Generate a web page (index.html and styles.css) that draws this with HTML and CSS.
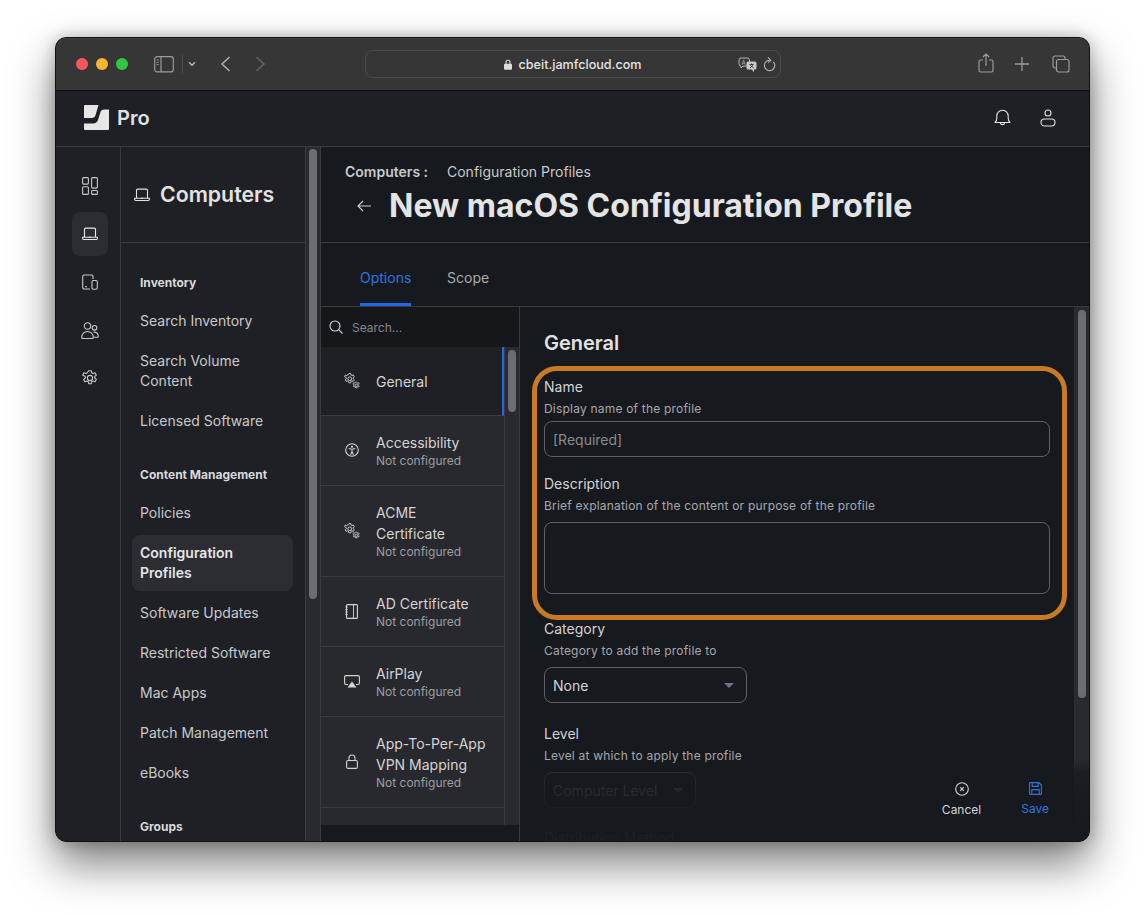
FILE: index.html
```html
<!DOCTYPE html>
<html lang="en">
<head>
<meta charset="utf-8">
<title>New macOS Configuration Profile</title>
<link rel="stylesheet" href="styles.css">
</head>
<body>
<svg class="defs" width="0" height="0" aria-hidden="true">
  <symbol id="laptop" viewBox="0 0 16 14"><path d="M2.5 10V2.3c0-.7.5-1.2 1.2-1.2h8.6c.7 0 1.2.5 1.2 1.2V10M.6 10.3h14.8v1c0 .8-.5 1.2-1.2 1.2H1.8c-.7 0-1.2-.4-1.2-1.2z" fill="none" stroke="currentColor" stroke-width="1.1"/><path d="M6.8 10.3h2.4" stroke="currentColor" stroke-width="1.1"/></symbol>
  <symbol id="gear-shape" viewBox="0 0 16 16"><path d="M6.7.8h2.600l.4 2 1.300.7 2-.7 1.300 2.300-1.600 1.400v1.500l1.600 1.400-1.300 2.300-2-.7-1.300.7-.4 2H6.700l-.4-2-1.300-.7-2 .7-1.300-2.300 1.600-1.400V6.500L.7 5.100 2 2.800l2 .7 1.300-.7z" stroke-linejoin="round"/><circle cx="8" cy="8" r="2.600"/></symbol>
  <symbol id="gears" viewBox="0 0 16 16"><g fill="none" stroke="currentColor"><use href="#gear-shape" x="0" y="0" width="11.500" height="11.500" stroke-width="1.300"/><use href="#gear-shape" x="8.500" y="8.500" width="7.500" height="7.500" stroke-width="1.700"/></g></symbol>
</svg>
<div class="window">
  <div class="toolbar">
    <span class="light red"></span><span class="light yellow"></span><span class="light green"></span>
    <svg class="tb-sidebar" width="20" height="17" viewBox="0 0 20 17" fill="none" stroke="#9b9b9b" stroke-width="1.200"><rect x=".7" y=".7" width="18.600" height="15.200" rx="2.500"/><path d="M7 .7v15.200"/><path d="M2.700 4h2M2.700 6.300h2M2.700 8.600h2" stroke-width="1"/></svg>
    <span class="tb-divider"></span>
    <svg class="tb-chev" width="8" height="6" viewBox="0 0 8 6" fill="none" stroke="#b5b5b5" stroke-width="1.500"><path d="M1 1.200l3 3 3-3"/></svg>
    <svg class="tb-back" width="11" height="16" viewBox="0 0 11 16" fill="none" stroke="#b0b0b0" stroke-width="1.500"><path d="M9.500 1L2 8l7.500 7"/></svg>
    <svg class="tb-fwd" width="11" height="16" viewBox="0 0 11 16" fill="none" stroke="#666" stroke-width="1.500"><path d="M1.500 1L9 8l-7.500 7"/></svg>
    <div class="address">
      <svg class="lock" width="8" height="11" viewBox="0 0 8 11"><path d="M2 5V3.200a2 2 0 014 0V5" fill="none" stroke="#ddd" stroke-width="1.100"/><rect y="4.700" width="8" height="6" rx="1.200" fill="#ddd"/></svg>
      <span class="url">cbeit.jamfcloud.com</span>
      <svg class="translate" width="19" height="15" viewBox="0 0 19 15"><path d="M3 1h6.500a2 2 0 012 2v4a2 2 0 01-2 2H5l-2 2V9a2 2 0 01-2-2V3a2 2 0 012-2z" fill="none" stroke="#b5b5b5"/><text x="3.500" y="7.500" class="translate-a">A</text><path d="M10 4.500h7a1.500 1.500 0 011.500 1.500v5a1.500 1.500 0 01-1.500 1.500h-1V15l-2.500-2.500H10A1.500 1.500 0 018.500 11V6A1.500 1.500 0 0110 4.500z" fill="#c8c8c8"/><path d="M11.500 7.500h4M13.500 6.500v1M12 11l3-3M12.500 8.500l3 2.500" stroke="#333" stroke-width=".9"/></svg>
      <svg class="reload" width="13" height="15" viewBox="0 0 13 15" fill="none" stroke="#b5b5b5" stroke-width="1.100"><path d="M6.500 3.200A5.200 5.200 0 1010.300 4.800"/><path d="M5 .5l2.800 2.700L5 5.700"/></svg>
    </div>
    <svg class="tb-share" width="16" height="20" viewBox="0 0 16 20" fill="none" stroke="#9b9b9b" stroke-width="1.200"><path d="M5 7H2.500A1.500 1.500 0 001 8.500v9A1.500 1.500 0 002.500 19h11a1.500 1.500 0 001.500-1.500v-9A1.500 1.500 0 0013.500 7H11M8 13V1M4.800 4L8 1l3.200 3"/></svg>
    <svg class="tb-plus" width="14" height="14" viewBox="0 0 14 14" fill="none" stroke="#9b9b9b" stroke-width="1.300"><path d="M7 0v14M0 7h14"/></svg>
    <svg class="tb-tabs" width="18" height="18" viewBox="0 0 18 18" fill="none" stroke="#9b9b9b" stroke-width="1.200"><path d="M4 13H3a2 2 0 01-2-2V3a2 2 0 012-2h8a2 2 0 012 2v1"/><rect x="4.500" y="4.500" width="12.500" height="12.500" rx="2"/></svg>
  </div>

  <header class="appbar">
    <svg class="logo" width="25" height="25" viewBox="0 0 25 25" fill="#e6e6e6"><path d="M1 0h13.500l-3 10.200c-.5 1.800-1.800 2.800-3.500 2.800H0V1a1 1 0 011-1z"/><path d="M20 4.500h5V24a1 1 0 01-1 1H1a1 1 0 01-1-1v-5.500h9c2.300 0 4.300-1.300 5-3.500l2.400-7.800c.5-1.600 2-2.700 3.600-2.700z"/></svg>
    <span class="brand">Pro</span>
    <span class="spacer"></span>
    <svg class="bell" width="17" height="18" viewBox="0 0 17 18" fill="none" stroke="#e2e2e2" stroke-width="1.100"><path d="M1 13.500c1.300-1 1.800-2.200 1.800-4.200V7a5.700 5.700 0 0111.400 0v2.300c0 2 .5 3.200 1.800 4.200z" stroke-linejoin="round"/><path d="M6.300 14a2.300 2.300 0 004.400 0"/></svg>
    <svg class="user" width="16" height="18" viewBox="0 0 16 18" fill="none" stroke="#e2e2e2" stroke-width="1.100"><circle cx="8" cy="4" r="3"/><rect x="1" y="10" width="14" height="7" rx="3.500"/></svg>
  </header>

  <div class="body">
    <nav class="rail">
      <span class="rail-btn"><svg width="16" height="18" viewBox="0 0 16 18" fill="none" stroke="currentColor" stroke-width="1.100"><rect x=".6" y=".6" width="5.800" height="6.500" rx="1"/><rect x="9.600" y=".6" width="5.800" height="10.500" rx="1"/><rect x=".6" y="9.700" width="5.800" height="7.700" rx="1"/><rect x="9.600" y="13.500" width="5.800" height="3.900" rx="1"/></svg></span>
      <span class="rail-btn active"><svg width="16" height="14"><use href="#laptop"/></svg></span>
      <span class="rail-btn"><svg width="16" height="16" viewBox="0 0 16 16" fill="none" stroke="currentColor" stroke-width="1.100"><path d="M8 15H2.200A1.500 1.500 0 01.700 13.500v-11A1.500 1.500 0 012.200 1h7.300A1.500 1.500 0 0111 2.500V5"/><rect x="10" y="6.500" width="5.300" height="8.800" rx="1.200"/><path d="M3 12.800h2"/></svg></span>
      <span class="rail-btn"><svg width="18" height="17" viewBox="0 0 18 17" fill="none" stroke="currentColor" stroke-width="1.100"><circle cx="6.500" cy="4" r="3.200"/><circle cx="13.500" cy="5.800" r="2.300"/><path d="M.7 15.500c0-3.500 2.500-6 5.800-6s5.800 2.500 5.800 6c0 .5-.4 1-1 1H1.700c-.6 0-1-.5-1-1z"/><path d="M12.500 10.200c2.700-.5 4.800 1.400 4.800 4 0 .5-.4 1-1 1h-3.300"/></svg></span>
      <span class="rail-btn"><svg width="16" height="16" fill="none" stroke="currentColor" stroke-width="1.100"><use href="#gear-shape"/></svg></span>
    </nav>

    <aside class="nav">
      <div class="nav-scroll">
        <div class="nav-head"><svg width="16" height="14"><use href="#laptop"/></svg><span>Computers</span></div>
        <div class="nav-section first">Inventory</div>
        <a class="nav-item">Search Inventory</a>
        <a class="nav-item">Search Volume<br>Content</a>
        <a class="nav-item">Licensed Software</a>
        <div class="nav-section">Content Management</div>
        <a class="nav-item">Policies</a>
        <a class="nav-item current">Configuration<br>Profiles</a>
        <a class="nav-item">Software Updates</a>
        <a class="nav-item">Restricted Software</a>
        <a class="nav-item">Mac Apps</a>
        <a class="nav-item">Patch Management</a>
        <a class="nav-item">eBooks</a>
        <div class="nav-section">Groups</div>
      </div>
      <div class="track nav-track"><span class="thumb"></span></div>
    </aside>

    <main class="main">
      <div class="page-head">
        <div class="crumbs"><b>Computers :</b><span>Configuration Profiles</span></div>
        <div class="title-row">
          <svg width="14" height="12" viewBox="0 0 14 12" fill="none" stroke="#cfcfcf" stroke-width="1.100"><path d="M14 6H1M6 1L1 6l5 5"/></svg>
          <h1>New macOS Configuration Profile</h1>
        </div>
      </div>
      <div class="tabs"><a class="tab on">Options</a><a class="tab">Scope</a></div>
      <div class="panels">
        <section class="payloads">
          <div class="search">
            <svg width="14" height="14" viewBox="0 0 14 14" fill="none" stroke="#d5d5d5" stroke-width="1.100"><circle cx="6" cy="6" r="5"/><path d="M9.700 9.700L13.500 13.500"/></svg>
            <span>Search...</span>
          </div>
          <div class="payload-scroll">
            <div class="payload-list">
              <div class="payload selected"><svg width="16" height="16"><use href="#gears"/></svg><div class="p-text"><div class="p-name">General</div></div></div>
              <div class="payload"><svg width="16" height="16" viewBox="0 0 16 16" fill="none" stroke="currentColor"><circle cx="8" cy="8" r="6.300" stroke-width="1.100"/><circle cx="8" cy="4.800" r="1.100" fill="currentColor" stroke="none"/><path d="M4.600 6.500L8 7.200l3.400-.7M8 7.200v2.500M8 9.700l-1.500 3M8 9.700l1.500 3" stroke-width="1.100"/></svg><div class="p-text"><div class="p-name">Accessibility</div><div class="p-sub">Not configured</div></div></div>
              <div class="payload"><svg width="16" height="16"><use href="#gears"/></svg><div class="p-text"><div class="p-name">ACME Certificate</div><div class="p-sub">Not configured</div></div></div>
              <div class="payload"><svg width="14" height="15" viewBox="0 0 14 15" fill="none" stroke="currentColor" stroke-width="1.100"><rect x="1.500" y=".6" width="10.900" height="13.800" rx="1"/><path d="M8.500.6v13.800M.3 3h2.400M.3 5.500h2.400M.3 8h2.400M.3 10.500h2.400" stroke-width=".9"/></svg><div class="p-text"><div class="p-name">AD Certificate</div><div class="p-sub">Not configured</div></div></div>
              <div class="payload"><svg width="16" height="13" viewBox="0 0 16 13" fill="none" stroke="currentColor" stroke-width="1.100"><path d="M4 9.500H2A1.400 1.400 0 01.600 8.100V2A1.400 1.400 0 012 .6h12A1.400 1.400 0 0115.400 2v6.100A1.400 1.400 0 0114 9.500h-2"/><path d="M8 6.500l4.500 5.900h-9z" fill="currentColor" stroke="none"/></svg><div class="p-text"><div class="p-name">AirPlay</div><div class="p-sub">Not configured</div></div></div>
              <div class="payload"><svg width="12" height="15" viewBox="0 0 12 15" fill="none" stroke="currentColor" stroke-width="1.100"><path d="M3 6.500V4a3 3 0 016 0v2.500"/><rect x=".6" y="6.500" width="10.800" height="7.900" rx="1.500"/></svg><div class="p-text"><div class="p-name">App-To-Per-App VPN Mapping</div><div class="p-sub">Not configured</div></div></div>
              <div class="payload"></div>
            </div>
            <div class="track list-track"><span class="thumb"></span></div>
          </div>
          <div class="payload-foot"></div>
        </section>

        <section class="form">
          <div class="form-body">
            <h2>General</h2>
            <label class="f-label">Name</label>
            <p class="f-help">Display name of the profile</p>
            <div class="input">[Required]</div>
            <label class="f-label">Description</label>
            <p class="f-help">Brief explanation of the content or purpose of the profile</p>
            <div class="input area"></div>
            <label class="f-label">Category</label>
            <p class="f-help">Category to add the profile to</p>
            <div class="input select cat"><span>None</span><i class="caret"></i></div>
            <label class="f-label">Level</label>
            <p class="f-help">Level at which to apply the profile</p>
            <div class="input select lvl"><span>Computer Level</span><i class="caret"></i></div>
            <label class="f-label">Distribution Method</label>
          </div>
          <div class="track form-track"><span class="thumb"></span></div>
          <div class="fade"></div>
          <div class="actions">
            <a class="action"><svg width="14" height="14" viewBox="0 0 14 14" fill="none" stroke="currentColor" stroke-width="1.100"><circle cx="7" cy="7" r="6.300"/><path d="M5.200 5.200l3.600 3.600M8.800 5.200l-3.600 3.600"/></svg><span>Cancel</span></a>
            <a class="action save"><svg width="13" height="13" viewBox="0 0 13 13" fill="none" stroke="currentColor" stroke-width="1.100"><path d="M1.500.6h8.300L12.400 3v8.400a1 1 0 01-1 1H1.500a1 1 0 01-1-1V1.600a1 1 0 011-1z"/><path d="M3.200.6v3.800h6V.6M2.800 12.400V7.600h7.400v4.800"/></svg><span>Save</span></a>
          </div>
        </section>
      </div>
    </main>
  </div>
  <div class="callout"></div>
</div>
</body>
</html>
```
FILE: styles.css
```css
* { box-sizing: border-box; }
html, body { margin: 0; height: 100%; }
body {
  background: #fff;
  padding: 37px 55px;
  font-family: Inter, "Liberation Sans", sans-serif;
  color: #d4d4d6;
  overflow: hidden;
}
.defs { position: absolute; }
h1, h2, p { margin: 0; }

.window {
  position: relative;
  width: 1035px;
  height: 805px;
  border: 1px solid #111;
  border-radius: 11px;
  overflow: hidden;
  display: flex;
  flex-direction: column;
  background: #1e2025;
}
body::before {
  content: "";
  position: absolute;
  left: 55px;
  top: 37px;
  width: 1035px;
  height: 805px;
  border-radius: 11px;
  box-shadow: 0 22px 44px rgba(0, 0, 0, .5), 0 0 16px rgba(0, 0, 0, .25);
}

/* Browser toolbar */
.toolbar {
  height: 53px;
  flex: none;
  display: flex;
  align-items: center;
  padding-left: 20px;
  padding-bottom: 1px;
  background: #363636;
  border-bottom: 1px solid #0c0c0c;
  border-top: 1px solid #444;
}
.light { width: 12px; height: 12px; border-radius: 50%; margin-right: 8px; }
.red { background: #f9565a; }
.yellow { background: #fbb52f; }
.green { background: #2fc641; }
.tb-sidebar { margin-left: 18px; }
.tb-divider { width: 1px; height: 18px; background: #4c4c4c; margin-left: 8px; }
.tb-chev { margin-left: 5px; }
.tb-back { margin-left: 24px; }
.tb-fwd { margin-left: 24px; }
.address {
  width: 416px;
  height: 28px;
  margin-left: 99px;
  position: relative;
  display: flex;
  align-items: center;
  justify-content: center;
  gap: 7px;
  border: 1px solid #4b4b4b;
  border-radius: 8px;
  padding-right: 1px;
}
.url { font-size: 12.6px; font-weight: 500; color: #e4e4e4; }
.translate, .reload { position: absolute; top: 6px; }
.translate { left: 372px; }
.reload { left: 397px; }
.translate-a { font-size: 6px; fill: #b5b5b5; font-family: Inter, sans-serif; }
.tb-share { margin-left: 197px; margin-top: -3px; }
.tb-plus { margin-left: 21px; }
.tb-tabs { margin-left: 23px; }

/* App bar */
.appbar {
  height: 56px;
  flex: none;
  display: flex;
  align-items: center;
  padding: 0 33px 2px 28px;
  background: #1e2025;
  border-bottom: 1px solid #3a3b40;
}
.logo { flex: none; }
.brand { font-size: 20px; font-weight: 600; color: #e2e2e3; margin-left: 8px; }
.spacer { flex: 1; }
.user { margin-left: 29px; }

.body { flex: 1; min-height: 0; display: flex; }

/* Icon rail */
.rail {
  width: 65px;
  flex: none;
  display: flex;
  flex-direction: column;
  align-items: center;
  padding: 17px 0 0 4px;
  gap: 4px;
  border-right: 1px solid #3a3b40;
  color: #c9c9cb;
}
.rail-btn {
  width: 36px;
  height: 44px;
  display: flex;
  align-items: center;
  justify-content: center;
  border-radius: 8px;
}
.rail-btn.active { background: #2b2d32; color: #e8e8e8; }

/* Section nav */
.nav {
  width: 200px;
  flex: none;
  display: flex;
  overflow: hidden;
  border-right: 1px solid #3a3b40;
}
.nav-scroll { width: 184px; flex: none; display: flex; flex-direction: column; overflow: hidden; }
.nav-head {
  height: 96px;
  flex: none;
  display: flex;
  align-items: center;
  gap: 10px;
  padding: 0 0 0 13px;
  margin-bottom: 30px;
  border-bottom: 1px solid #3a3b40;
  font-size: 21.3px;
  font-weight: 600;
  color: #e2e2e3;
}
.nav-head span { margin-top: -2px; }
.nav-section {
  flex: none;
  margin: 24px 0 8px 19px;
  font-size: 12px;
  line-height: 20px;
  font-weight: 700;
  color: #d9d9da;
}
.nav-section.first { margin-top: 0; }
.nav-item {
  flex: none;
  margin: 2px 12px 2px 11px;
  padding: 8px;
  font-size: 14px;
  line-height: 20px;
  color: #c9c9cb;
  border-radius: 8px;
}
.nav-item.current { background: #2b2d32; color: #e6e6e7; font-weight: 600; }

/* Scrollbars */
.track { flex: none; background: #292a2f; position: relative; }
.thumb { position: absolute; display: block; background: #6c6d72; border-radius: 4px; width: 8px; }
.nav-track { width: 15px; border-left: 1px solid #3a3b40; }
.nav-track .thumb { left: 3px; top: 2px; height: 450px; }
.list-track { width: 14px; }
.list-track .thumb { left: 3px; top: 3px; height: 62px; }
.form-track { width: 15px; border-left: 1px solid #2e2f34; }
.form-track .thumb { left: 3px; top: 3px; height: 388px; }

/* Main */
.main { flex: 1; min-width: 0; display: flex; flex-direction: column; background: #16191e; }
.page-head { height: 96px; flex: none; padding: 16px 0 0 24px; border-bottom: 1px solid #3a3b40; }
.crumbs { display: flex; font-size: 14px; line-height: 18px; color: #c9c9cb; }
.crumbs b { font-weight: 600; width: 102px; }
.title-row { display: flex; align-items: center; margin: 3px 0 0 12px; }
.title-row h1 { margin-left: 18px; font-size: 32px; line-height: 44px; font-weight: 700; color: #e4e4e5; }
.tabs { height: 64px; flex: none; display: flex; gap: 36px; padding-left: 39px; border-bottom: 1px solid #3a3b40; }
.tab { display: block; font-size: 14px; padding-top: 26px; color: #a9a9ac; height: 63px; }
.tab.on { color: #2f74e0; border-bottom: 3px solid #2068e6; width: 51px; }

.panels { flex: 1; min-height: 0; display: flex; }

/* Payload list */
.payloads { width: 199px; flex: none; display: flex; flex-direction: column; border-right: 1px solid #3a3b40; }
.search { height: 40px; flex: none; display: flex; align-items: center; gap: 9px; padding-left: 8px; font-size: 12px; color: #85868a; background: #15171b; }
.payload-scroll { flex: 1; min-height: 0; display: flex; overflow: hidden; background: #292a2f; }
.payload-list { width: 184px; flex: none; overflow: hidden; border-right: 1px solid #3a3b40; }
.payload {
  min-height: 70px;
  display: flex;
  align-items: center;
  padding: 16px 12px 17px 23px;
  gap: 16px;
  background: #28292e;
  border-bottom: 1px solid #3a3b40;
  color: #d4d4d6;
}
.payload svg { flex: none; width: 16px; }
.payload.selected { min-height: 69px; padding: 0 10px 0 23px; background: #1e2025; border-right: 2px solid #2068e6; }
.p-text { width: 112px; flex: none; }
.p-name { font-size: 14px; line-height: 21px; color: #d4d4d6; }
.p-sub { font-size: 12px; line-height: 15px; color: #9d9ea1; }
.payload-foot { height: 16px; flex: none; background: #16191e; }

/* Form */
.form { flex: 1; min-width: 0; display: flex; position: relative; overflow: hidden; }
.form-body { flex: 1; min-width: 0; padding: 23px 24px 0; }
.form-body h2 { font-size: 20px; line-height: 26px; font-weight: 600; color: #e2e2e3; margin-bottom: 21px; }
.f-label { display: block; font-size: 14px; line-height: 20px; color: #d4d4d6; }
.f-help { font-size: 12px; line-height: 18px; margin: 3px 0 3px; color: #a7a8ab; letter-spacing: .2px; }
.input {
  height: 36px;
  margin-bottom: 17px;
  padding: 0 8px;
  display: flex;
  align-items: center;
  font-size: 14px;
  color: #8a8b8f;
  border: 1px solid #5f6065;
  border-radius: 8px;
}
.area { height: 72px; margin-top: 7px; margin-bottom: 25px; }
.select { justify-content: space-between; color: #d4d4d6; padding-right: 12px; margin-top: 7px; }
.cat { width: 203px; margin-bottom: 21px; }
.lvl { width: 152px; margin-bottom: 20px; color: #8a8b8f; }
.caret { width: 0; height: 0; border: 5px solid transparent; border-top-color: #6b7280; border-bottom-width: 0; }
.fade {
  position: absolute;
  left: 0;
  right: 0;
  bottom: 0;
  height: 82px;
  background: linear-gradient(to bottom, rgba(22, 25, 30, 0), rgba(22, 25, 30, .72) 16%, rgba(22, 25, 30, .86) 40%, rgba(22, 25, 30, .97) 95%);
}
.actions { position: absolute; right: 40px; bottom: 24px; display: flex; gap: 40px; }
.action { display: flex; flex-direction: column; align-items: center; gap: 7px; font-size: 12px; line-height: 14px; color: #d4d4d6; }
.action.save { color: #2f74e0; }

/* Annotation drawn over the form */
.callout {
  position: absolute;
  left: 476px;
  top: 328px;
  width: 535px;
  height: 254px;
  border: 5px solid #c97a22;
  border-radius: 25px;
  pointer-events: none;
}
```
